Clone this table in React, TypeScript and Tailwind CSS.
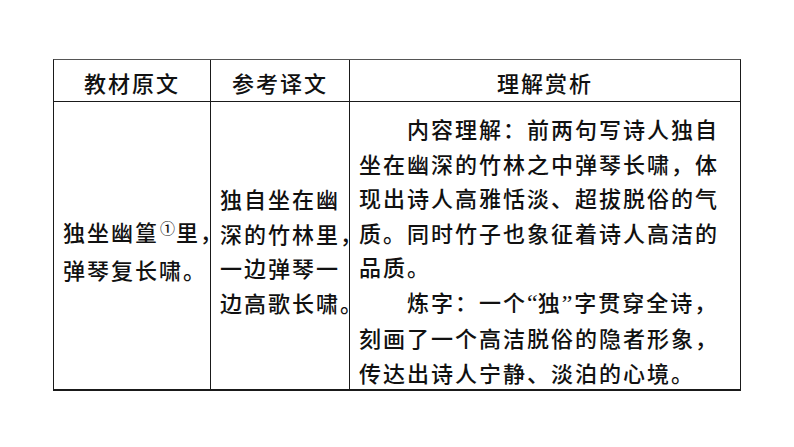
import React from 'react';

const headers = ['教材原文', '参考译文', '理解赏析'];

const col2Lines = ['独自坐在幽', '深的竹林里，', '一边弹琴一', '边高歌长啸。'];

const quoteFont = { fontFamily: '"Liberation Serif", serif' };

const App: React.FC = () => {
  return (
    <div
      className="w-[794px] h-[447px] bg-white pl-[53px] pt-[59px] text-[#111] text-[22px] font-medium tracking-[2px] leading-[34.5px]"
      style={{ fontFamily: '"Noto Sans CJK SC", "Noto Sans", sans-serif' }}
    >
      <div className="w-[688px] grid grid-cols-[157px_139px_390px] border-t border-l border-r border-b-2 border-[#1a1a1a] border-t-[#555]">
        {/* Header */}
        {headers.map((h, i) => (
          <div
            key={h}
            className={`h-[42px] flex items-center justify-center pt-[4px] border-b border-[#1a1a1a] ${i < 2 ? 'border-r' : ''}`}
          >
            {h}
          </div>
        ))}

        {/* 教材原文 */}
        <div className="h-[287px] flex flex-col justify-center pt-[9px] pl-[9px] border-r border-[#1a1a1a] whitespace-nowrap">
          <div>
            独坐幽篁<span className="text-[15px] tracking-normal relative -top-[7px] mx-[1px]">①</span>里，
          </div>
          <div>弹琴复长啸。</div>
        </div>

        {/* 参考译文 */}
        <div className="h-[287px] flex flex-col justify-center pt-[9px] pl-[9px] border-r border-[#1a1a1a] whitespace-nowrap">
          {col2Lines.map((l) => (
            <div key={l}>{l}</div>
          ))}
        </div>

        {/* 理解赏析 */}
        <div className="h-[287px] flex flex-col justify-center pt-[9px] pl-[9px] whitespace-nowrap">
          <div className="pl-[48px]">内容理解：前两句写诗人独自</div>
          <div>坐在幽深的竹林之中弹琴长啸，体</div>
          <div>现出诗人高雅恬淡、超拔脱俗的气</div>
          <div>质。同时竹子也象征着诗人高洁的</div>
          <div>品质。</div>
          <div className="pl-[48px]">
            炼字：一个<span className="tracking-normal text-[24px]" style={quoteFont}>“</span>独<span className="tracking-normal text-[24px] pr-[2px]" style={quoteFont}>”</span>字贯穿全诗，
          </div>
          <div>刻画了一个高洁脱俗的隐者形象，</div>
          <div>传达出诗人宁静、淡泊的心境。</div>
        </div>
      </div>
    </div>
  );
};

export default App;
